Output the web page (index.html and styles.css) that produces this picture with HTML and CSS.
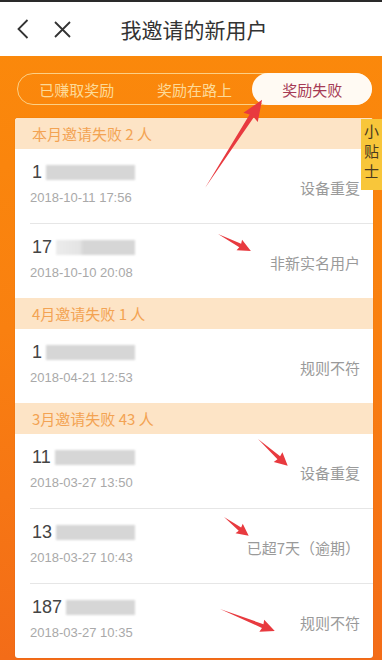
FILE: index.html
```html
<!DOCTYPE html>
<html lang="zh-CN">
<head>
<meta charset="utf-8">
<title>我邀请的新用户</title>
<link rel="stylesheet" href="styles.css">
</head>
<body>
<div class="page">
  <header class="topbar">
    <div class="nav-icons">
      <svg class="ico-back" width="12" height="20" viewBox="0 0 12 20"><polyline points="10.5,1 1.5,10 10.5,19" fill="none" stroke="#333" stroke-width="1.8"/></svg>
      <svg class="ico-close" width="17" height="17" viewBox="0 0 17 17"><path d="M1 1 L16 16 M16 1 L1 16" fill="none" stroke="#333" stroke-width="1.8"/></svg>
    </div>
    <h1 class="title">我邀请的新用户</h1>
    <div class="spacer"></div>
  </header>

  <nav class="tabs">
    <div class="tab">已赚取奖励</div>
    <div class="tab">奖励在路上</div>
    <div class="tab active">奖励失败</div>
  </nav>

  <section class="card">
    <div class="group-head">本月邀请失败 2 人</div>
    <div class="row">
      <div class="info">
        <div class="phone"><span>1</span><span class="mask"></span></div>
        <div class="date">2018-10-11 17:56</div>
      </div>
      <div class="reason">设备重复</div>
    </div>
    <div class="row divided">
      <div class="info">
        <div class="phone"><span>17</span><span class="mask light"></span></div>
        <div class="date">2018-10-10 20:08</div>
      </div>
      <div class="reason">非新实名用户</div>
    </div>

    <div class="group-head">4月邀请失败 1 人</div>
    <div class="row">
      <div class="info">
        <div class="phone"><span>1</span><span class="mask"></span></div>
        <div class="date">2018-04-21 12:53</div>
      </div>
      <div class="reason">规则不符</div>
    </div>

    <div class="group-head">3月邀请失败 43 人</div>
    <div class="row">
      <div class="info">
        <div class="phone"><span>11</span><span class="mask"></span></div>
        <div class="date">2018-03-27 13:50</div>
      </div>
      <div class="reason">设备重复</div>
    </div>
    <div class="row divided">
      <div class="info">
        <div class="phone"><span>13</span><span class="mask"></span></div>
        <div class="date">2018-03-27 10:43</div>
      </div>
      <div class="reason">已超7天（逾期）</div>
    </div>
    <div class="row divided">
      <div class="info">
        <div class="phone"><span>187</span><span class="mask"></span></div>
        <div class="date">2018-03-27 10:35</div>
      </div>
      <div class="reason">规则不符</div>
    </div>
  </section>

  <aside class="tip"><span class="tip-text">小贴士</span></aside>

  <svg class="arrows" width="382" height="660" viewBox="0 0 382 660">
    <g fill="#e83a3f">
      <polygon transform="translate(205,188) rotate(-57.1)" points="0,0 86,-2.5 84,-8.5 105,0 84,8.5 86,2.5"/>
      <polygon transform="translate(218,234) rotate(27.3)" points="0,0 25,-2 24,-6 37,0 24,6 25,2"/>
      <polygon transform="translate(258,439) rotate(42)" points="0,0 28,-2 27,-6.5 40,0 27,6.5 28,2"/>
      <polygon transform="translate(224,517) rotate(37.2)" points="0,0 20,-2 19,-6 31,0 19,6 20,2"/>
      <polygon transform="translate(220,609) rotate(21.8)" points="0,0 46,-2 45,-6.5 59,0 45,6.5 46,2"/>
    </g>
  </svg>
</div>
</body>
</html>
```

FILE: styles.css
```css
* { box-sizing: border-box; }
html, body { margin: 0; padding: 0; }
body {
  width: 382px;
  height: 660px;
  overflow: hidden;
  font-family: "Liberation Sans", "Noto Sans CJK SC", sans-serif;
  background: linear-gradient(to bottom, #fb8a0a 0%, #f98010 50%, #f36c18 100%);
}
.page {
  position: relative;
  height: 660px;
  border-top: 2px solid #2a2a2a;
}
.topbar {
  height: 54px;
  background: #fff;
  display: grid;
  grid-template-columns: 1fr auto 1fr;
  align-items: center;
}
.nav-icons {
  display: flex;
  align-items: center;
  gap: 25px;
  padding-left: 17px;
}
.ico-back, .ico-close { display: block; }
.title {
  margin: 0;
  padding-left: 6px;
  font-size: 21px;
  font-weight: normal;
  color: #333;
  font-family: "Noto Sans CJK SC", sans-serif;
}
.tabs {
  margin: 17px 10px 0 17px;
  height: 32px;
  border: 1px solid #fcd085;
  border-radius: 16px;
  display: flex;
}
.tab {
  flex: 1;
  display: flex;
  align-items: center;
  justify-content: center;
  font-family: "Noto Sans CJK SC", sans-serif;
  font-size: 15px;
  color: #fdda98;
  border-radius: 16px;
  margin: -1px;
}
.tab.active {
  background: #fffaf3;
  color: #a63a55;
}
.card {
  margin: 13px 9px 0 15px;
  background: #fff;
  border-radius: 3px;
  overflow: hidden;
  box-shadow: 0 0 1px rgba(0,0,0,0.2);
}
.group-head {
  height: 31px;
  background: #fde4c6;
  color: #f3a353;
  font-family: "Noto Sans CJK SC", sans-serif;
  font-size: 15px;
  display: flex;
  align-items: center;
  padding-left: 17px;
}
.row {
  height: 74px;
  display: flex;
  align-items: flex-start;
  justify-content: space-between;
  margin-left: 15px;
  padding-right: 13px;
}
.row.divided {
  height: 75px;
  border-top: 1px solid #e6e6e6;
}
.info {
  padding-top: 13px;
}
.phone {
  display: flex;
  align-items: center;
  width: 105px;
  height: 20px;
  font-size: 18px;
  color: #444;
  padding-left: 2px;
}
.mask {
  flex: 1;
  height: 15px;
  margin-left: 4px;
  background: #d6d6d6;
  filter: blur(1.2px);
}
.mask.light {
  background: linear-gradient(to right, #ececec 0%, #e4e4e4 30%, #d6d6d6 35%, #d6d6d6 100%);
}
.date {
  margin-top: 7px;
  font-size: 13px;
  line-height: 18px;
  color: #a9a9a9;
}
.reason {
  margin-top: 29px;
  font-family: "Noto Sans CJK SC", sans-serif;
  font-size: 15px;
  line-height: 20px;
  color: #9a9a9a;
}
.tip {
  position: absolute;
  right: 0;
  top: 117px;
  width: 21px;
  height: 71px;
  overflow: hidden;
  background: #f8c63a;
  padding: 5px 0 0 3px;
}
.tip-text {
  display: block;
  writing-mode: vertical-rl;
  text-orientation: upright;
  color: #4a3a20;
  font-family: "Noto Sans CJK SC", sans-serif;
  font-size: 15px;
  line-height: 15px;
  letter-spacing: 5px;
  white-space: nowrap;
}
.arrows {
  position: absolute;
  left: 0;
  top: -2px;
  pointer-events: none;
}
```
